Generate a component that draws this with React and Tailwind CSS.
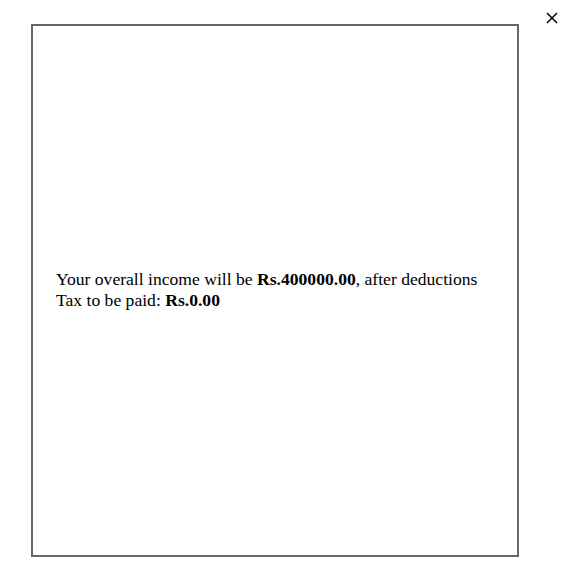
export default function App() {
  return (
    <div className="relative w-[572px] h-[574px] bg-white" style={{ fontFamily: '"Liberation Serif", "Times New Roman", serif' }}>
      <button className="absolute left-[545px] top-[11px] w-[13px] h-[13px] flex items-center justify-center text-black">
        <svg width="12" height="12" viewBox="0 0 12 12" fill="none" stroke="currentColor" strokeWidth="1.5">
          <path d="M1 1L11 11M11 1L1 11" />
        </svg>
      </button>
      <div className="pt-[24px] pl-[31px]">
        <div className="w-[488px] h-[533px] border-2 border-[#666666] flex flex-col justify-center px-[23px] pb-[2px] text-[17.6px] leading-[21px] text-black">
          <p>
            Your overall income will be <b>Rs.400000.00</b>, after deductions
          </p>
          <p>
            Tax to be paid: <b>Rs.0.00</b>
          </p>
        </div>
      </div>
    </div>
  );
}
